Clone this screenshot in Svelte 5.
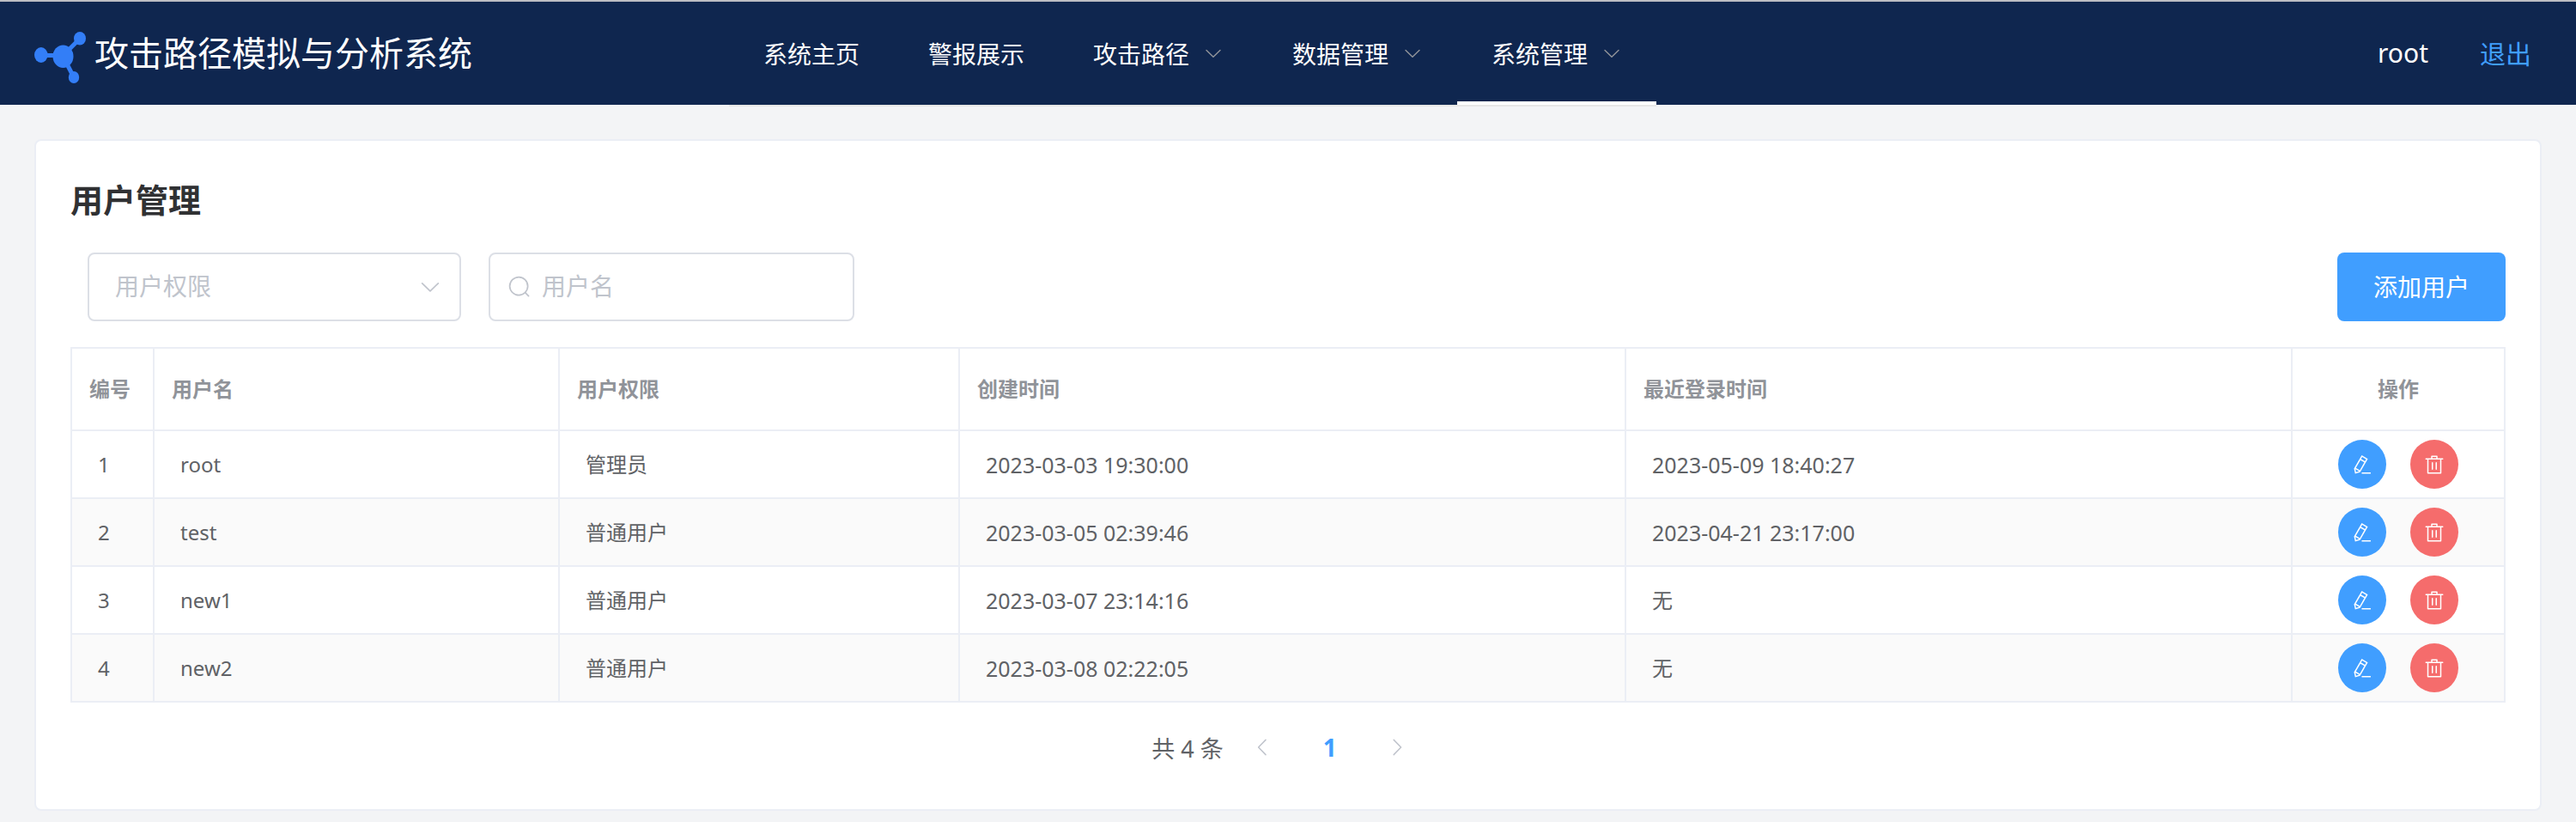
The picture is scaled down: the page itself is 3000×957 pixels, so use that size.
<script>
  const arrowDown =
    'M831.872 340.864 512 652.672 192.128 340.864a30.592 30.592 0 0 0-42.752 0 29.12 29.12 0 0 0 0 41.6L489.664 714.24a32 32 0 0 0 44.672 0l340.288-331.712a29.12 29.12 0 0 0 0-41.728 30.592 30.592 0 0 0-42.752 0z';
  const arrowLeft =
    'M609.408 149.376 277.76 489.6a32 32 0 0 0 0 44.672l331.648 340.352a29.12 29.12 0 0 0 41.728 0 30.592 30.592 0 0 0 0-42.752L339.264 511.936l311.872-319.872a30.592 30.592 0 0 0 0-42.688 29.12 29.12 0 0 0-41.728 0z';
  const arrowRight =
    'M340.864 149.312a30.592 30.592 0 0 0 0 42.752L652.736 512 340.864 831.872a30.592 30.592 0 0 0 0 42.752 29.12 29.12 0 0 0 41.728 0L714.24 534.336a32 32 0 0 0 0-44.672L382.592 149.376a29.12 29.12 0 0 0-41.728 0z';
  const search =
    'm795.904 750.72 124.992 124.928a32 32 0 0 1-45.248 45.248L750.656 795.904a416 416 0 1 1 45.248-45.248zM480 832a352 352 0 1 0 0-704 352 352 0 0 0 0 704z';
  const editPen =
    'm199.04 672.64 193.984 112 224-387.968-193.92-112-224 388.032zm-23.872 60.16 32.896 148.288 144.896-45.696L175.168 732.8zM455.04 229.248l193.92 112 56.704-98.112-193.984-112-56.64 98.112zM104.32 708.8l384-665.024 304.768 175.936L409.152 884.8h.064l-248.448 78.336L104.32 708.8zm384 254.272v-64h448v64h-448z';
  const trash =
    'M160 256H96a32 32 0 0 1 0-64h256V95.936a32 32 0 0 1 32-32h256a32 32 0 0 1 32 32V192h256a32 32 0 1 1 0 64h-64v672a32 32 0 0 1-32 32H192a32 32 0 0 1-32-32V256zm448-64v-64H416v64h192zM224 896h576V256H224v640zm192-128a32 32 0 0 1-32-32V416a32 32 0 0 1 64 0v320a32 32 0 0 1-32 32zm192 0a32 32 0 0 1-32-32V416a32 32 0 0 1 64 0v320a32 32 0 0 1-32 32z';

  const menu = [
    { label: '系统主页' },
    { label: '警报展示' },
    { label: '攻击路径', sub: true },
    { label: '数据管理', sub: true },
    { label: '系统管理', sub: true, active: true }
  ];

  const users = [
    { id: 1, name: 'root', role: '管理员', created: '2023-03-03 19:30:00', login: '2023-05-09 18:40:27' },
    { id: 2, name: 'test', role: '普通用户', created: '2023-03-05 02:39:46', login: '2023-04-21 23:17:00' },
    { id: 3, name: 'new1', role: '普通用户', created: '2023-03-07 23:14:16', login: '无' },
    { id: 4, name: 'new2', role: '普通用户', created: '2023-03-08 02:22:05', login: '无' }
  ];

  let role = $state('');
  let keyword = $state('');
</script>

{#snippet icon(path)}
  <svg class="icon" viewBox="0 0 1024 1024" aria-hidden="true"><path fill="currentColor" d={path} /></svg>
{/snippet}

<div class="page">
  <header>
    <div class="brand">
      <svg class="logo" viewBox="0 0 60 60" aria-hidden="true">
        <g stroke="#337ef7" stroke-width="5">
          <path d="M8 27.500H33" />
          <path d="M33 28 53 8" />
          <path d="M33 28 46 53" />
        </g>
        <g fill="#337ef7">
          <ellipse cx="7.800" cy="27" rx="7.800" ry="9" />
          <ellipse cx="33.500" cy="28.700" rx="12" ry="13.300" />
          <ellipse cx="53" cy="7.700" rx="7" ry="7.700" />
          <ellipse cx="46" cy="53" rx="6.200" ry="7" />
        </g>
      </svg>
      <span class="system">攻击路径模拟与分析系统</span>
    </div>
    <nav>
      {#each menu as item}
        <a href="#menu" class:active={item.active}>
          {item.label}
          {#if item.sub}{@render icon(arrowDown)}{/if}
        </a>
      {/each}
    </nav>
    <div class="account">
      <span>root</span>
      <a href="#logout">退出</a>
    </div>
  </header>

  <main>
    <h2>用户管理</h2>
    <div class="toolbar">
      <div class="field role">
        <select bind:value={role} aria-label="用户权限">
          <option value="">用户权限</option>
          <option value="admin">管理员</option>
          <option value="user">普通用户</option>
        </select>
        {@render icon(arrowDown)}
      </div>
      <label class="field keyword">
        {@render icon(search)}
        <input type="text" placeholder="用户名" aria-label="用户名" bind:value={keyword} />
      </label>
      <button class="add" type="button">添加用户</button>
    </div>

    <table>
      <colgroup>
        <col class="c-id" />
        <col class="c-name" />
        <col class="c-role" />
        <col />
        <col />
        <col class="c-ops" />
      </colgroup>
      <thead>
        <tr>
          <th>编号</th>
          <th>用户名</th>
          <th>用户权限</th>
          <th>创建时间</th>
          <th>最近登录时间</th>
          <th class="ops-head">操作</th>
        </tr>
      </thead>
      <tbody>
        {#each users as user}
          <tr>
            <td>{user.id}</td>
            <td>{user.name}</td>
            <td>{user.role}</td>
            <td class="time">{user.created}</td>
            <td class:time={user.login !== '无'}>{user.login}</td>
            <td class="ops-cell">
              <div class="ops">
                <button class="edit" type="button" aria-label="编辑">{@render icon(editPen)}</button>
                <button class="delete" type="button" aria-label="删除">{@render icon(trash)}</button>
              </div>
            </td>
          </tr>
        {/each}
      </tbody>
    </table>

    <div class="pagination">
      <span>共 4 条</span>
      <button type="button" aria-label="上一页" disabled>{@render icon(arrowLeft)}</button>
      <button type="button" class="current">1</button>
      <button type="button" aria-label="下一页" disabled>{@render icon(arrowRight)}</button>
    </div>
  </main>
</div>

<style>
  :global(body) {
    margin: 0;
    background: #f3f4f6;
  }
  .page {
    min-height: 100vh;
    box-sizing: border-box;
    border-top: 2px solid #bdbdc3;
    font-family: 'Noto Sans', 'Noto Sans CJK SC', sans-serif;
    font-size: 24px;
    color: #606266;
  }
  .page *,
  .page :global(svg) {
    box-sizing: border-box;
  }
  a {
    text-decoration: none;
  }
  button {
    border: none;
    padding: 0;
    font-family: inherit;
    cursor: pointer;
  }
  .icon {
    display: block;
    flex: none;
    width: 24px;
    height: 24px;
  }

  header {
    display: flex;
    height: 120px;
    padding: 0 52px 0 40px;
    background: #0f264f;
    color: #fff;
  }
  .brand {
    display: flex;
    align-items: center;
    gap: 10px;
    width: 809px;
  }
  .logo {
    width: 60px;
    height: 60px;
    margin-top: 10px;
  }
  .system {
    font-size: 40px;
    line-height: 60px;
  }
  nav {
    display: flex;
    height: 122px;
    border-bottom: 2px solid #e6e6e6;
  }
  nav a {
    display: flex;
    align-items: center;
    gap: 16px;
    padding: 4px 40px 0;
    border-bottom: 4px solid transparent;
    font-size: 28px;
    color: #fff;
  }
  nav .icon {
    color: #909399;
  }
  nav .active {
    border-bottom-color: #fff;
  }
  .account {
    display: flex;
    align-items: center;
    gap: 60px;
    margin-left: auto;
    padding-bottom: 2px;
    font-size: 30px;
  }
  .account a {
    color: #409eff;
  }

  main {
    margin: 40px 40px 0;
    padding: 40px 40px 42px;
    border: 2px solid #ebeef5;
    border-radius: 8px;
    background: #fff;
  }
  h2 {
    margin: 0 0 34px;
    font-size: 38px;
    line-height: 56px;
    color: #303133;
  }
  .toolbar {
    display: flex;
    align-items: center;
    gap: 32px;
    padding-left: 20px;
    margin-bottom: 30px;
  }
  .field {
    display: flex;
    align-items: center;
    height: 80px;
    border: 2px solid #dcdfe6;
    border-radius: 8px;
    background: #fff;
    color: #c0c4cc;
  }
  .role {
    position: relative;
    width: 435px;
  }
  .role .icon {
    position: absolute;
    right: 20px;
    width: 28px;
    height: 28px;
    pointer-events: none;
  }
  .keyword {
    width: 426px;
    padding: 0 20px;
    gap: 12px;
  }
  .keyword .icon {
    width: 28px;
    height: 28px;
  }
  select,
  input {
    flex: 1;
    min-width: 0;
    height: 100%;
    margin: 0;
    padding: 0 0 2px;
    border: none;
    outline: none;
    background: transparent;
    appearance: none;
    font-family: inherit;
    font-size: 28px;
    color: #c0c4cc;
  }
  select {
    padding: 0 60px 2px 30px;
  }
  input::placeholder {
    color: #c0c4cc;
  }
  .add {
    width: 196px;
    height: 80px;
    margin-left: auto;
    padding-bottom: 2px;
    border-radius: 8px;
    background: #409eff;
    font-size: 28px;
    color: #fff;
  }

  table {
    width: 100%;
    table-layout: fixed;
    border-collapse: separate;
    border-spacing: 0;
    border-top: 2px solid #ebeef5;
    border-left: 2px solid #ebeef5;
  }
  .c-id {
    width: 96px;
  }
  .c-name {
    width: 472px;
  }
  .c-role {
    width: 466px;
  }
  .c-ops {
    width: 248px;
  }
  th,
  td {
    border-right: 2px solid #ebeef5;
    border-bottom: 2px solid #ebeef5;
    text-align: left;
    line-height: 32px;
  }
  th {
    height: 96px;
    padding: 0 10px 0 20px;
    font-weight: 700;
    color: #909399;
  }
  .ops-head {
    padding: 0;
    text-align: center;
  }
  td {
    height: 79px;
    padding: 0 30px;
  }
  .time {
    font-size: 25px;
  }
  tbody tr:nth-child(even) {
    background: #fafafa;
  }
  .ops-cell {
    padding: 0;
  }
  .ops {
    display: flex;
    justify-content: center;
    gap: 28px;
  }
  .ops button {
    display: flex;
    align-items: center;
    justify-content: center;
    width: 56px;
    height: 57px;
    border-radius: 50%;
    color: #fff;
  }
  .edit {
    background: #409eff;
  }
  .delete {
    background: #f56c6c;
  }

  .pagination {
    display: flex;
    align-items: center;
    justify-content: center;
    gap: 14px;
    margin-top: 22px;
    font-size: 27px;
  }
  .pagination button {
    display: flex;
    align-items: center;
    justify-content: center;
    width: 64px;
    height: 60px;
    background: transparent;
    color: #c0c4cc;
  }
  .pagination .icon {
    width: 26px;
    height: 26px;
  }
  .pagination .current {
    font-size: 28px;
    font-weight: 700;
    color: #409eff;
  }
</style>
